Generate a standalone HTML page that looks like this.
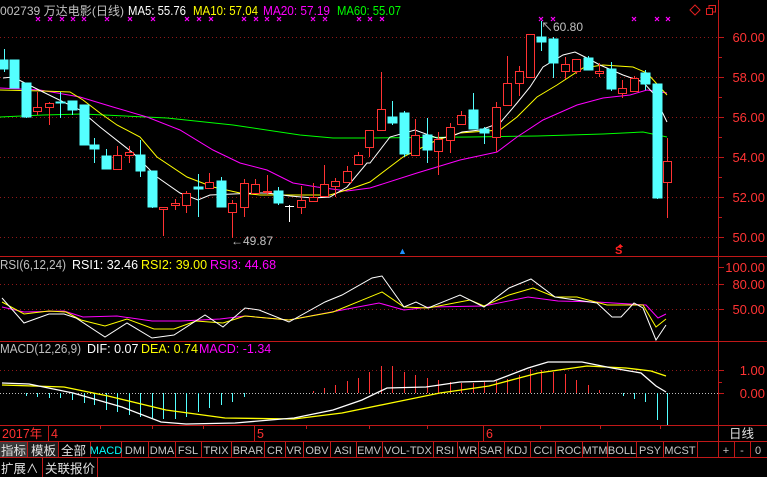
<!DOCTYPE html>
<html><head><meta charset="utf-8">
<style>
html,body{margin:0;padding:0;background:#000;width:767px;height:477px;overflow:hidden}
svg{display:block}
text{font-family:"Liberation Sans","Noto Sans CJK SC",sans-serif}
.m{font-family:"Liberation Mono","Noto Sans CJK SC",monospace}
</style></head><body>
<svg width="767" height="477" viewBox="0 0 767 477" xmlns="http://www.w3.org/2000/svg" shape-rendering="crispEdges">
<rect width="767" height="477" fill="#000"/>
<!-- title -->
<text x="0" y="15" font-size="12" fill="#c0c0c0" textLength="124" lengthAdjust="spacingAndGlyphs">002739 万达电影(日线)</text>
<text x="128" y="15" font-size="12.5" fill="#fff" textLength="58" lengthAdjust="spacingAndGlyphs">MA5: 55.76</text>
<text x="193" y="15" font-size="12.5" fill="#ffff00" textLength="65" lengthAdjust="spacingAndGlyphs">MA10: 57.04</text>
<text x="263" y="15" font-size="12.5" fill="#ff00ff" textLength="67" lengthAdjust="spacingAndGlyphs">MA20: 57.19</text>
<text x="337" y="15" font-size="12.5" fill="#00ff00" textLength="64" lengthAdjust="spacingAndGlyphs">MA60: 55.07</text>
<!-- markers -->
<g stroke="#ff00ff" stroke-width="1.2" shape-rendering="auto">
<path d="M36,17l4,4m0,-4l-4,4M48,17l4,4m0,-4l-4,4M60,17l4,4m0,-4l-4,4M71,17l4,4m0,-4l-4,4M82,17l4,4m0,-4l-4,4M105,17l4,4m0,-4l-4,4M128,17l4,4m0,-4l-4,4M151,17l4,4m0,-4l-4,4M185,17l4,4m0,-4l-4,4M197,17l4,4m0,-4l-4,4M209,17l4,4m0,-4l-4,4M242,17l4,4m0,-4l-4,4M254,17l4,4m0,-4l-4,4M265,17l4,4m0,-4l-4,4M277,17l4,4m0,-4l-4,4M311,17l4,4m0,-4l-4,4M323,17l4,4m0,-4l-4,4M357,17l4,4m0,-4l-4,4M368,17l4,4m0,-4l-4,4M380,17l4,4m0,-4l-4,4M539,17l4,4m0,-4l-4,4M551,17l4,4m0,-4l-4,4M632,17l4,4m0,-4l-4,4M655,17l4,4m0,-4l-4,4M666,17l4,4m0,-4l-4,4"/>
</g>
<!-- top right icons -->
<g fill="none" stroke="#e02020" stroke-width="1" shape-rendering="auto">
<path d="M695,5l5,5l-5,5l-5,-5z"/>
<rect x="706.5" y="8.5" width="6" height="6"/><path d="M709,8.5v-3h6.5v6.5h-3"/>
</g>
<!-- grid -->
<g stroke="#901818" stroke-dasharray="1 3">
<path d="M0,37.5H718M0,77.5H718M0,117.5H718M0,157.5H718M0,197.5H718M0,237.5H718M0,284.5H718M0,309.5H718M0,370.5H718"/>
</g>
<path d="M0,393.5H718" stroke="#c0c0c0" stroke-dasharray="1 2"/>
<!-- frame -->
<g stroke="#c01818" fill="none">
<path d="M718.5,0V441M0,256.5H767M0,341.5H767M0,425.5H767M0,441.5H767M0,457.5H767"/>
</g>
<!-- axis ticks -->
<g stroke="#c01818">
<path d="M718,37.5h6M718,57.5h4M718,77.5h6M718,97.5h4M718,117.5h6M718,137.5h4M718,157.5h6M718,177.5h4M718,197.5h6M718,217.5h4M718,237.5h6M718,267.5h6M718,284.5h6M718,309.5h6M718,370.5h6M718,382.5h4M718,393.5h6"/>
</g>
<g font-size="13" fill="#ff3333" text-anchor="end">
<text x="765" y="42">60.00</text><text x="765" y="82">58.00</text><text x="765" y="122">56.00</text>
<text x="765" y="162">54.00</text><text x="765" y="202">52.00</text><text x="765" y="242">50.00</text>
<text x="765" y="272">100.00</text><text x="765" y="289">80.00</text><text x="765" y="314">50.00</text>
<text x="765" y="375">1.00</text><text x="765" y="398">0.00</text>
</g>
<!-- MA lines -->
<g fill="none" stroke-width="1" shape-rendering="auto">
<polyline stroke="#00ff00" points="0,117 43,115 83,114 167,118 233,125 300,135 333,138 370,138 470,137 537,136 603,134 643,132 667,137"/>
<polyline stroke="#ff00ff" points="0,88 40,90 80,97 113,107 147,117 180,130 213,150 240,163 267,170 293,183 317,187 347,191 370,188 417,173 460,160 497,152 517,137 543,120 577,105 603,98 630,95 647,90 667,93"/>
<polyline stroke="#ffff00" points="0,90 43,91 70,92 83,100 100,113 117,125 140,137 157,157 187,177 213,187 240,193 260,195 300,195 330,195 353,188 370,182 403,157 437,140 460,133 500,130 517,117 537,97 557,85 583,68 603,65 633,67 647,73 667,95"/>
<polyline stroke="#ffffff" points="3,78 13,77 43,92 80,110 100,127 133,153 157,177 180,193 198,200 210,195 233,194 257,193 267,193 290,196 313,198 330,197 347,187 367,163 370,163 390,137 415,130 437,138 450,137 462,132 480,130 500,123 517,103 530,87 543,67 563,55 575,52 587,58 600,65 623,75 643,82 653,93 667,122"/>
</g>
<!-- candles cyan -->
<g fill="#54ffff" stroke="#54ffff">
<path d="M4.5,49V72M14.5,60V88M26.5,83V118M60.5,92V118M72.5,101V115M84.5,105V145M94.5,138V163M106.5,149V169M140.5,140V177M152.5,171V208M198.5,174V217M221.5,177V207M278.5,187V205M392.5,101V125M404.5,111V157M427.5,118V163M473.5,93V129M484.5,127V144M541.5,21V51M553.5,37V78M588.5,56V70M611.5,62V91M645.5,70V90M657.5,84V199" fill="none"/>
<rect x="0" y="60" width="8" height="9"/><rect x="10" y="60" width="9" height="28"/><rect x="22" y="83" width="9" height="34"/>
<rect x="56" y="102" width="9" height="1"/><rect x="68" y="101" width="9" height="9"/><rect x="80" y="105" width="9" height="40"/>
<rect x="90" y="145" width="9" height="4"/><rect x="102" y="156" width="9" height="13"/><rect x="136" y="155" width="9" height="16"/>
<rect x="148" y="171" width="9" height="36"/><rect x="194" y="187" width="9" height="2"/><rect x="217" y="181" width="9" height="26"/>
<rect x="274" y="191" width="9" height="12"/><rect x="388" y="117" width="9" height="6"/><rect x="400" y="113" width="9" height="41"/>
<rect x="423" y="135" width="9" height="15"/><rect x="469" y="110" width="9" height="19"/><rect x="480" y="129" width="9" height="4"/>
<rect x="537" y="37" width="9" height="5"/><rect x="549" y="39" width="9" height="24"/><rect x="584" y="58" width="9" height="12"/>
<rect x="607" y="69" width="9" height="20"/><rect x="641" y="73" width="9" height="11"/><rect x="653" y="84" width="9" height="114"/>
</g>
<!-- candles red -->
<g fill="#000" stroke="#ff3232">
<path d="M37.5,92V107M37.5,111V115M49.5,102V103M49.5,107V125M117.5,146V155M129.5,146V152M129.5,155V163M163.5,207V236M175.5,199V203M175.5,205V210M186.5,191V193M186.5,205V213M209.5,173V182M232.5,200V203M232.5,212V238M244.5,179V183M244.5,207V217M255.5,179V184M267.5,175V195M301.5,186V200M301.5,207V214M313.5,183V197M324.5,165V184M324.5,196V197M335.5,178V181M335.5,186V197M347.5,166V171M358.5,152V155M369.5,147V157M381.5,72V109M415.5,119V135M438.5,132V139M438.5,151V175M450.5,123V127M450.5,140V153M461.5,111V115M496.5,102V107M496.5,137V152M507.5,56V83M519.5,66V71M519.5,83V96M565.5,57V64M565.5,71V79M576.5,71V74M599.5,63V77M622.5,80V88M622.5,93V98M634.5,76V78M667.5,138V161M667.5,182V218" fill="none"/>
<rect x="33.5" y="107.5" width="8" height="4"/><rect x="45.5" y="103.5" width="8" height="4"/><rect x="113.5" y="155.5" width="8" height="14"/>
<rect x="125.5" y="152.5" width="8" height="3"/><rect x="159.5" y="207.5" width="8" height="2"/><rect x="171.5" y="203.5" width="8" height="2"/>
<rect x="182.5" y="193.5" width="8" height="12"/><rect x="205.5" y="182.5" width="8" height="6"/><rect x="228.5" y="203.5" width="8" height="9"/>
<rect x="240.5" y="183.5" width="8" height="24"/><rect x="251.5" y="184.5" width="8" height="9"/><rect x="263.5" y="191.5" width="8" height="1"/>
<rect x="297.5" y="200.5" width="8" height="7"/><rect x="309.5" y="197.5" width="8" height="4"/><rect x="320.5" y="184.5" width="8" height="12"/>
<rect x="331.5" y="181.5" width="8" height="5"/><rect x="343.5" y="171.5" width="8" height="11"/><rect x="354.5" y="155.5" width="8" height="9"/>
<rect x="365.5" y="130.5" width="8" height="17"/><rect x="377.5" y="109.5" width="8" height="21"/><rect x="411.5" y="135.5" width="8" height="20"/>
<rect x="434.5" y="139.5" width="8" height="12"/><rect x="446.5" y="127.5" width="8" height="13"/><rect x="457.5" y="115.5" width="8" height="9"/>
<rect x="492.5" y="107.5" width="8" height="30"/><rect x="503.5" y="83.5" width="8" height="22"/><rect x="515.5" y="71.5" width="8" height="12"/>
<rect x="526.5" y="34.5" width="8" height="43"/><rect x="561.5" y="64.5" width="8" height="7"/><rect x="572.5" y="59.5" width="8" height="12"/>
<rect x="595.5" y="71.5" width="8" height="2"/><rect x="618.5" y="88.5" width="8" height="5"/><rect x="630.5" y="78.5" width="8" height="13"/>
<rect x="663.5" y="161.5" width="8" height="21"/>
</g>
<path d="M289.5,205V222M285,206.5h9" stroke="#fff"/>
<!-- annotations -->
<text x="231" y="245" font-size="12" fill="#c0c0c0">←49.87</text>
<text x="541" y="31" font-size="12" fill="#c0c0c0">↖60.80</text>
<text x="398" y="254" font-size="9" fill="#1e90ff">▲</text>
<text x="615" y="254" font-size="11" fill="#ff2020" font-weight="bold">S</text>
<path d="M620,244l-3,3h6z" fill="#ff2020"/>
<!-- RSI -->
<text x="0" y="269" font-size="12.5" fill="#c0c0c0" textLength="66" lengthAdjust="spacingAndGlyphs">RSI(6,12,24)</text>
<text x="72" y="269" font-size="12.5" fill="#fff">RSI1: 32.46</text>
<text x="141" y="269" font-size="12.5" fill="#ffff00">RSI2: 39.00</text>
<text x="210" y="269" font-size="12.5" fill="#ff00ff">RSI3: 44.68</text>
<g fill="none" shape-rendering="auto">
<polyline stroke="#ff00ff" points="2,307 24,312 64,311 83,317 117,316 152,321 181,321 220,319 245,316 289,320 342,310 379,303 404,310 430,307 484,306 528,297 558,301 597,302 646,305 658,318 666,314"/>
<polyline stroke="#ffff00" points="2,302 24,314 49,311 66,312 81,320 105,326 127,319 154,329 174,329 196,321 223,323 245,316 289,320 333,312 382,292 404,307 428,308 470,300 484,306 509,295 533,288 555,297 577,297 607,305 643,305 656,327 666,319"/>
<polyline stroke="#fff" points="2,298 24,323 49,314 64,314 76,318 105,337 127,323 152,338 174,335 205,315 223,327 245,308 259,310 289,322 325,302 342,295 372,278 382,276 404,307 416,302 428,308 460,295 484,307 509,288 531,279 555,297 597,303 612,317 621,317 634,303 643,308 656,340 666,325"/>
</g>
<!-- MACD -->
<text x="0" y="353" font-size="12.5" fill="#c0c0c0" textLength="81" lengthAdjust="spacingAndGlyphs">MACD(12,26,9)</text>
<text x="87" y="353" font-size="12.5" fill="#fff">DIF: 0.07</text>
<text x="141" y="353" font-size="12.5" fill="#ffff00">DEA: 0.74</text>
<text x="199" y="353" font-size="12.5" fill="#ff00ff">MACD: -1.34</text>
<path stroke="#54ffff" fill="none" d="M26.5,393V396M37.5,393V397M49.5,393V398M60.5,393V398M72.5,393V400M84.5,393V403M94.5,393V405M106.5,393V410M117.5,393V412M129.5,393V415M140.5,393V417M152.5,393V418M163.5,393V419M175.5,393V419M186.5,393V417M198.5,393V412M209.5,393V408M221.5,393V405M232.5,393V402M244.5,393V397M623.5,393V396M634.5,393V399M645.5,393V402M657.5,393V420M667.5,393V425"/>
<path stroke="#ff3232" fill="none" d="M313.5,393V391M324.5,393V388M335.5,393V385M347.5,393V381M358.5,393V378M369.5,393V372M381.5,393V366M392.5,393V366M404.5,393V372M415.5,393V375M427.5,393V378M438.5,393V380M450.5,393V382M461.5,393V383M473.5,393V383M484.5,393V382M496.5,393V381M507.5,393V379M519.5,393V375M530.5,393V369M541.5,393V370M553.5,393V372M565.5,393V374M576.5,393V380M588.5,393V385M599.5,393V390"/>
<g fill="none" shape-rendering="auto">
<polyline stroke="#ffff00" stroke-width="1.3" points="2,385 64,387 108,396 166,410 225,418 294,419 342,413 391,403 440,393 489,386 538,373 587,366 626,368 651,371 666,376"/>
<polyline stroke="#fff" stroke-width="1.3" points="2,383 29,384 73,393 122,407 161,422 186,424 235,423 294,418 333,410 362,400 387,388 426,387 460,382 494,381 528,368 548,362 582,362 612,368 641,373 656,386 666,392"/>
</g>
<!-- date row -->
<g stroke="#c01818"><path d="M48.5,426V441M254.5,426V441M483.5,426V441M100.5,426V429M152.5,426V429M203.5,426V429M306.5,426V429M369.5,426V429M427.5,426V429M540.5,426V429M600.5,426V429M660.5,426V429"/></g>
<text x="2" y="438" font-size="12.5" fill="#ff3030">2017年</text>
<text x="51" y="438" font-size="12.5" fill="#ff3030">4</text>
<text x="257" y="438" font-size="12.5" fill="#ff3030">5</text>
<text x="486" y="438" font-size="12.5" fill="#ff3030">6</text>
<text x="729" y="438" font-size="12.5" fill="#e0e0e0">日线</text>
<!-- tab row -->
<rect x="0" y="442" width="27" height="15" fill="#3a3a3a"/>
<rect x="28" y="442" width="30" height="15" fill="#1e1e1e"/>
<g stroke="#c01818"><path d="M27.5,442V457M58.5,442V457M90.5,442V457M121.5,442V457M148.5,442V457M175.5,442V457M201.5,442V457M231.5,442V457M264.5,442V457M285.5,442V457M303.5,442V457M330.5,442V457M356.5,442V457M382.5,442V457M433.5,442V457M457.5,442V457M478.5,442V457M504.5,442V457M530.5,442V457M555.5,442V457M582.5,442V457M607.5,442V457M636.5,442V457M663.5,442V457M697.5,442V457M718.5,442V457M734.5,442V457M750.5,442V457M42.5,458V477M97.5,458V477"/></g>
<g font-size="12.5" fill="#e0e0e0">
<text x="1" y="455">指标</text><text x="31" y="455">模板</text><text x="61" y="455">全部</text>
<text x="1" y="473">扩展∧</text><text x="45" y="473">关联报价</text>
</g>
<g class="m" font-size="11" fill="#c8c8c8" text-anchor="middle">
<text x="106" y="454" fill="#00ffff">MACD</text><text x="135" y="454">DMI</text><text x="162" y="454">DMA</text>
<text x="188" y="454">FSL</text><text x="216" y="454">TRIX</text><text x="248" y="454">BRAR</text><text x="275" y="454">CR</text>
<text x="294" y="454">VR</text><text x="317" y="454">OBV</text><text x="343" y="454">ASI</text><text x="369" y="454">EMV</text>
<text x="408" y="454">VOL-TDX</text><text x="445" y="454">RSI</text><text x="468" y="454">WR</text><text x="491" y="454">SAR</text>
<text x="517" y="454">KDJ</text><text x="543" y="454">CCI</text><text x="569" y="454">ROC</text><text x="595" y="454">MTM</text>
<text x="622" y="454">BOLL</text><text x="650" y="454">PSY</text><text x="680" y="454">MCST</text>
<text x="726" y="454">+</text><text x="742" y="454">-</text><text x="758" y="454">0</text>
</g>
</svg>
</body></html>
